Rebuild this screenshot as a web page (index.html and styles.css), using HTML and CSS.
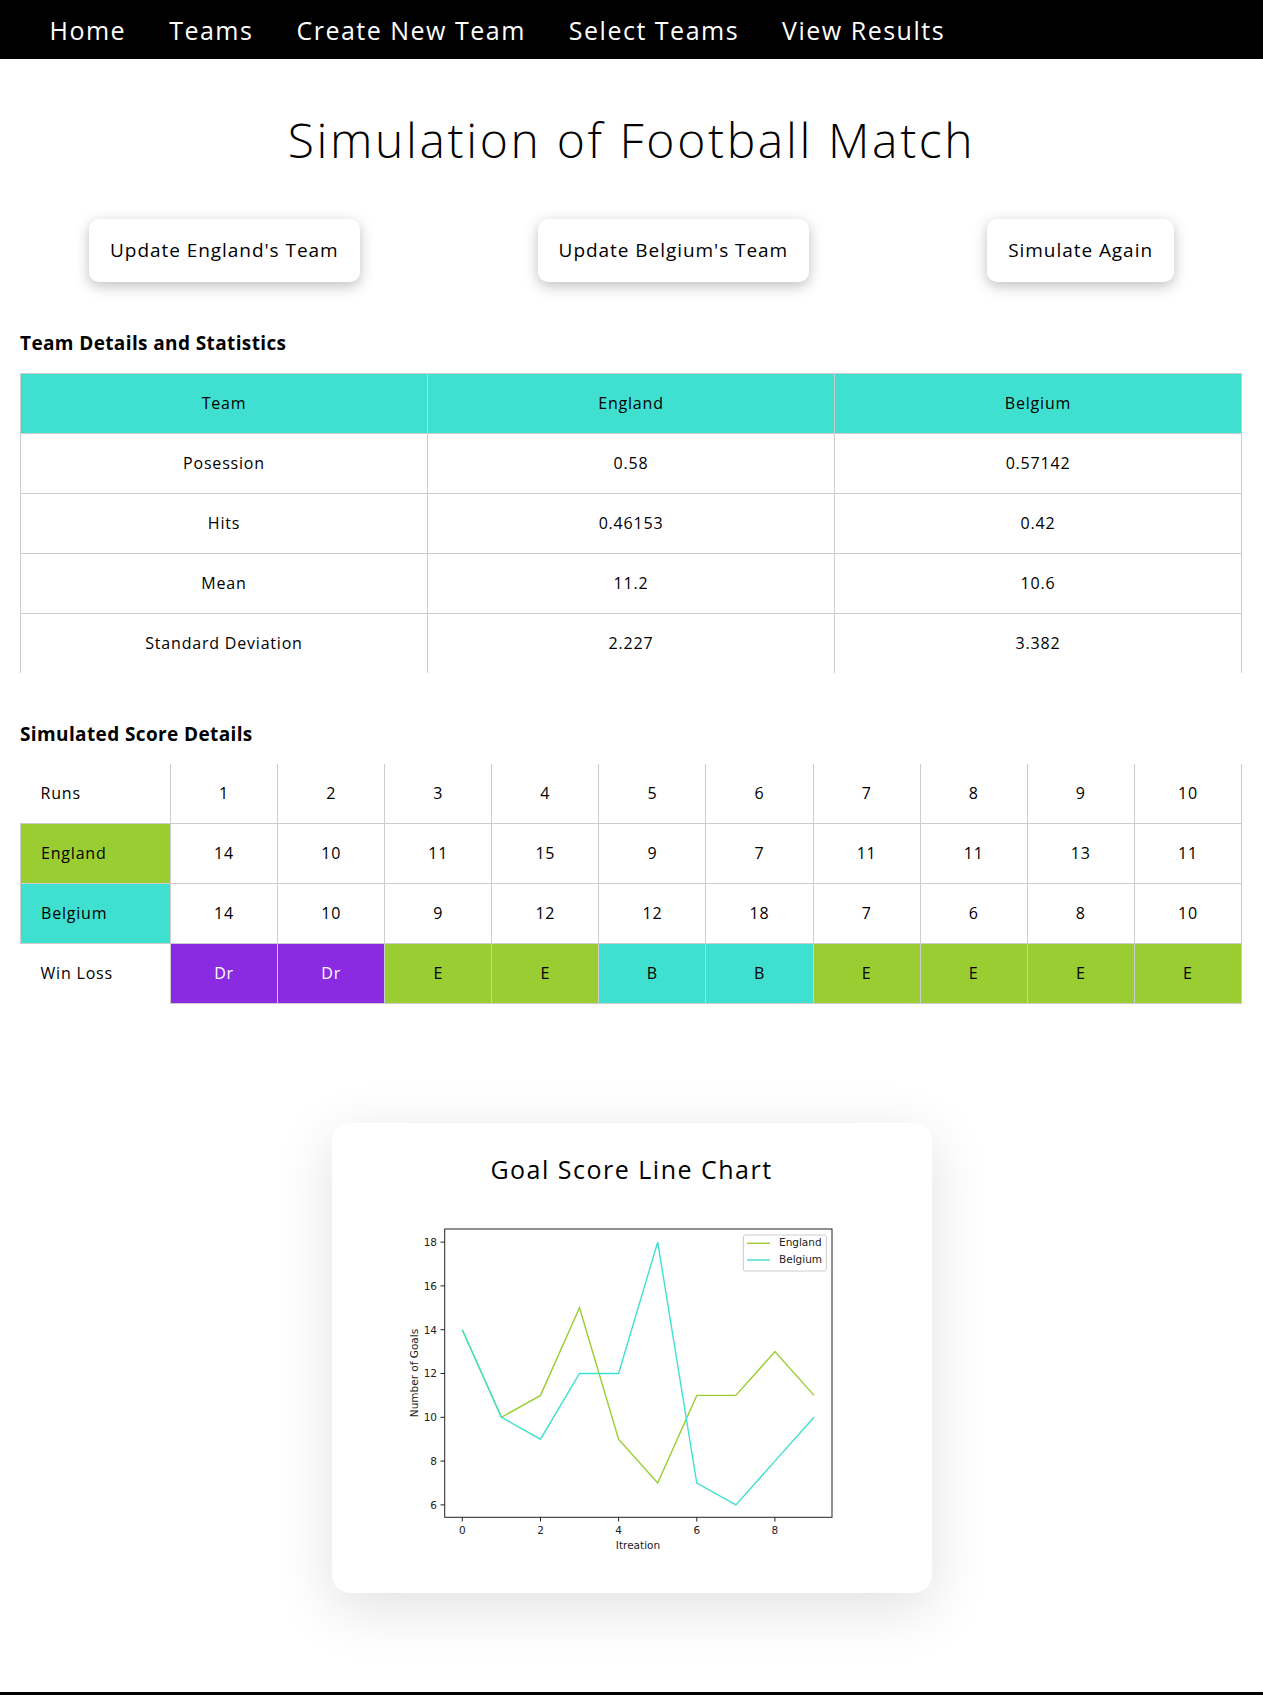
FILE: index.html
```html
<!DOCTYPE html>
<html lang="en">
<head>
    <meta charset="UTF-8">
    <meta name="viewport" content="width=device-width, initial-scale=1.0">
    <title>Football Simulation Results</title>
    <link rel="stylesheet" href="styles.css">
</head>
<body>
    <nav class="topnav">
        <a href="#">Home</a>
        <a href="#">Teams</a>
        <a href="#">Create New Team</a>
        <a href="#">Select Teams</a>
        <a href="#">View Results</a>
    </nav>

    <h1 class="page-title">Simulation of Football Match</h1>

    <div class="actions">
        <button class="action-btn">Update England's Team</button>
        <button class="action-btn">Update Belgium's Team</button>
        <button class="action-btn">Simulate Again</button>
    </div>

    <section class="block">
        <h3 class="block-title">Team Details and Statistics</h3>
        <table class="stats-table">
            <tr class="head">
                <td>Team</td>
                <td>England</td>
                <td>Belgium</td>
            </tr>
            <tr>
                <td>Posession</td>
                <td>0.58</td>
                <td>0.57142</td>
            </tr>
            <tr>
                <td>Hits</td>
                <td>0.46153</td>
                <td>0.42</td>
            </tr>
            <tr>
                <td>Mean</td>
                <td>11.2</td>
                <td>10.6</td>
            </tr>
            <tr class="last">
                <td>Standard Deviation</td>
                <td>2.227</td>
                <td>3.382</td>
            </tr>
        </table>
    </section>

    <section class="block">
        <h3 class="block-title">Simulated Score Details</h3>
        <table class="score-table">
            <colgroup>
                <col class="label-col">
            </colgroup>
            <tr class="runs">
                <td class="label plain">Runs</td>
                <td>1</td><td>2</td><td>3</td><td>4</td><td>5</td>
                <td>6</td><td>7</td><td>8</td><td>9</td><td>10</td>
            </tr>
            <tr>
                <td class="label eng">England</td>
                <td>14</td><td>10</td><td>11</td><td>15</td><td>9</td>
                <td>7</td><td>11</td><td>11</td><td>13</td><td>11</td>
            </tr>
            <tr>
                <td class="label bel">Belgium</td>
                <td>14</td><td>10</td><td>9</td><td>12</td><td>12</td>
                <td>18</td><td>7</td><td>6</td><td>8</td><td>10</td>
            </tr>
            <tr>
                <td class="label plain">Win Loss</td>
                <td class="draw">Dr</td><td class="draw">Dr</td>
                <td class="eng">E</td><td class="eng">E</td>
                <td class="bel">B</td><td class="bel">B</td>
                <td class="eng">E</td><td class="eng">E</td>
                <td class="eng">E</td><td class="eng">E</td>
            </tr>
        </table>
    </section>

    <div class="chart-card">
        <h2 class="chart-title">Goal Score Line Chart</h2>
        <svg class="chart" width="480" height="360" viewBox="0 0 480 360">
            <!-- axes box -->
            <rect x="52.7" y="30" width="387.3" height="288.3" fill="#fff" stroke="#222" stroke-width="1"/>

            <!-- y ticks -->
            <g stroke="#222" stroke-width="1">
                <line x1="48.5" y1="305.9" x2="52.7" y2="305.9"/>
                <line x1="48.5" y1="262.1" x2="52.7" y2="262.1"/>
                <line x1="48.5" y1="218.3" x2="52.7" y2="218.3"/>
                <line x1="48.5" y1="174.5" x2="52.7" y2="174.5"/>
                <line x1="48.5" y1="130.7" x2="52.7" y2="130.7"/>
                <line x1="48.5" y1="86.9" x2="52.7" y2="86.9"/>
                <line x1="48.5" y1="43.1" x2="52.7" y2="43.1"/>
            </g>
            <g class="tick-text" text-anchor="end">
                <text x="45" y="309.7">6</text>
                <text x="45" y="265.9">8</text>
                <text x="45" y="222.1">10</text>
                <text x="45" y="178.3">12</text>
                <text x="45" y="134.5">14</text>
                <text x="45" y="90.7">16</text>
                <text x="45" y="46.9">18</text>
            </g>

            <!-- x ticks -->
            <g stroke="#222" stroke-width="1">
                <line x1="70.3" y1="318.3" x2="70.3" y2="322.5"/>
                <line x1="148.5" y1="318.3" x2="148.5" y2="322.5"/>
                <line x1="226.6" y1="318.3" x2="226.6" y2="322.5"/>
                <line x1="304.8" y1="318.3" x2="304.8" y2="322.5"/>
                <line x1="382.9" y1="318.3" x2="382.9" y2="322.5"/>
            </g>
            <g class="tick-text" text-anchor="middle">
                <text x="70.3" y="335.3">0</text>
                <text x="148.5" y="335.3">2</text>
                <text x="226.6" y="335.3">4</text>
                <text x="304.8" y="335.3">6</text>
                <text x="382.9" y="335.3">8</text>
            </g>

            <text class="tick-text" x="246" y="349.5" text-anchor="middle">Itreation</text>
            <text class="tick-text" x="0" y="0" text-anchor="middle" transform="translate(25.5 174) rotate(-90)">Number of Goals</text>

            <!-- data -->
            <polyline fill="none" stroke="#9acd32" stroke-width="1.4"
                points="70.3,130.7 109.4,218.3 148.5,196.4 187.5,108.8 226.6,240.2 265.7,284 304.8,196.4 343.9,196.4 382.9,152.6 422,196.4"/>
            <polyline fill="none" stroke="#40e0d0" stroke-width="1.4"
                points="70.3,130.7 109.4,218.3 148.5,240.2 187.5,174.5 226.6,174.5 265.7,43.1 304.8,284 343.9,305.9 382.9,262.1 422,218.3"/>

            <!-- legend -->
            <rect x="351.4" y="36" width="83" height="36" rx="2" fill="#fff" fill-opacity="0.8" stroke="#ccc" stroke-width="1"/>
            <line x1="355" y1="44.3" x2="378" y2="44.3" stroke="#9acd32" stroke-width="1.4"/>
            <line x1="355" y1="61" x2="378" y2="61" stroke="#40e0d0" stroke-width="1.4"/>
            <text class="tick-text" x="387" y="47.2">England</text>
            <text class="tick-text" x="387" y="64">Belgium</text>
        </svg>
    </div>

    <footer class="footer"></footer>
</body>
</html>
```

FILE: styles.css
```css
body {
    margin: 0;
    font-family: "Open Sans", sans-serif;
    letter-spacing: 0.05em;
    color: #000;
    background-color: #fff;
}

.topnav {
    display: flex;
    align-items: center;
    height: 59px;
    padding-left: 28px;
    background-color: #000;
}

.topnav a {
    padding: 0 21.5px;
    color: #fff;
    font-size: 25px;
    letter-spacing: 0.06em;
    text-decoration: none;
}

.page-title {
    margin: 52px 0 0;
    font-size: 48px;
    font-weight: 300;
    line-height: 1.2;
    letter-spacing: 0.055em;
    text-align: center;
}

.actions {
    display: flex;
    justify-content: space-around;
    margin-top: 50px;
}

.action-btn {
    padding: 19px 21px;
    border: none;
    border-radius: 10px;
    background-color: #fff;
    font-family: inherit;
    font-size: 19px;
    line-height: 25px;
    letter-spacing: 0.05em;
    color: #000;
    box-shadow: 0 4px 14px rgba(0, 0, 0, 0.25);
    cursor: pointer;
}

.block {
    margin-top: 49px;
}

.block-title {
    margin: 0 0 18px 20px;
    font-size: 19px;
    font-weight: 700;
    line-height: 24px;
    letter-spacing: 0.02em;
}

table {
    width: calc(100% - 41px);
    margin: 0 21px 0 20px;
    border-collapse: collapse;
    table-layout: fixed;
    font-size: 16px;
}

td {
    height: 59px;
    padding: 0;
    border: 1px solid #ccc;
    text-align: center;
}

.stats-table .head td {
    background-color: #40e0d0;
}

.stats-table .last td {
    border-bottom: none;
}

.score-table {
    margin-top: 2px;
}

.score-table .label-col {
    width: 150px;
}

.score-table .runs td {
    border-top: none;
}

.score-table .label {
    padding-left: 20px;
    text-align: left;
}

.score-table .plain {
    border-left: none;
    border-top: none;
    border-bottom: none;
}

.eng {
    background-color: #9acd32;
}

.bel {
    background-color: #40e0d0;
}

.draw {
    background-color: #8a2be2;
    color: #fff;
}

.chart-card {
    width: 600px;
    margin: 119px auto 0;
    padding: 30px 0 34px;
    box-sizing: border-box;
    border-radius: 18px;
    background-color: #fff;
    box-shadow: 0 15px 60px rgba(0, 0, 0, 0.12);
    text-align: center;
}

.chart-title {
    margin: 0 0 14px;
    font-size: 25px;
    font-weight: 500;
    line-height: 32px;
    letter-spacing: 0.06em;
}

.chart {
    display: block;
    margin: 0 auto;
    letter-spacing: 0;
}

.tick-text {
    font-family: "DejaVu Sans", sans-serif;
    font-size: 10.5px;
    fill: #222;
}

.footer {
    height: 40px;
    margin-top: 99px;
    background-color: #000;
}
```
